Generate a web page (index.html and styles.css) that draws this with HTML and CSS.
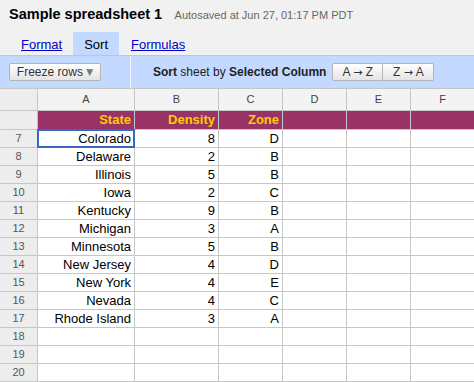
FILE: index.html
```html
<!DOCTYPE html>
<html lang="en">
<head>
  <meta charset="UTF-8">
  <title>Sample spreadsheet 1</title>
  <link rel="stylesheet" href="styles.css">
</head>

<body>
  <div class="titlebar">
    <span class="doc-title">Sample spreadsheet 1</span>
    <span class="autosave">Autosaved at Jun 27, 01:17 PM PDT</span>
  </div>

  <div class="tabs">
    <a class="tab" href="#">Format</a>
    <span class="tab active">Sort</span>
    <a class="tab" href="#">Formulas</a>
  </div>

  <div class="toolbar">
    <button class="btn freeze">Freeze rows <span class="caret">&#9660;</span></button>
    <div class="sep"></div>
    <span class="sort-label"><b>Sort</b> sheet by <b>Selected Column</b></span>
    <div class="btn-group">
      <button class="btn">A <span class="arrow">&rarr;</span> Z</button>
      <button class="btn">Z <span class="arrow">&rarr;</span> A</button>
    </div>
  </div>

  <div class="sheet">
    <div class="row colhead">
      <div class="corner"></div>
      <div>A</div><div>B</div><div>C</div><div>D</div><div>E</div><div>F</div>
    </div>
    <div class="row head">
      <div class="rownum"></div>
      <div>State</div><div>Density</div><div>Zone</div><div></div><div></div><div></div>
    </div>
    <div class="row">
      <div class="rownum">7</div>
      <div class="selected">Colorado</div><div>8</div><div>D</div><div></div><div></div><div></div>
    </div>
    <div class="row">
      <div class="rownum">8</div>
      <div>Delaware</div><div>2</div><div>B</div><div></div><div></div><div></div>
    </div>
    <div class="row">
      <div class="rownum">9</div>
      <div>Illinois</div><div>5</div><div>B</div><div></div><div></div><div></div>
    </div>
    <div class="row">
      <div class="rownum">10</div>
      <div>Iowa</div><div>2</div><div>C</div><div></div><div></div><div></div>
    </div>
    <div class="row">
      <div class="rownum">11</div>
      <div>Kentucky</div><div>9</div><div>B</div><div></div><div></div><div></div>
    </div>
    <div class="row">
      <div class="rownum">12</div>
      <div>Michigan</div><div>3</div><div>A</div><div></div><div></div><div></div>
    </div>
    <div class="row">
      <div class="rownum">13</div>
      <div>Minnesota</div><div>5</div><div>B</div><div></div><div></div><div></div>
    </div>
    <div class="row">
      <div class="rownum">14</div>
      <div>New Jersey</div><div>4</div><div>D</div><div></div><div></div><div></div>
    </div>
    <div class="row">
      <div class="rownum">15</div>
      <div>New York</div><div>4</div><div>E</div><div></div><div></div><div></div>
    </div>
    <div class="row">
      <div class="rownum">16</div>
      <div>Nevada</div><div>4</div><div>C</div><div></div><div></div><div></div>
    </div>
    <div class="row">
      <div class="rownum">17</div>
      <div>Rhode Island</div><div>3</div><div>A</div><div></div><div></div><div></div>
    </div>
    <div class="row">
      <div class="rownum">18</div>
      <div></div><div></div><div></div><div></div><div></div><div></div>
    </div>
    <div class="row">
      <div class="rownum">19</div>
      <div></div><div></div><div></div><div></div><div></div><div></div>
    </div>
    <div class="row">
      <div class="rownum">20</div>
      <div></div><div></div><div></div><div></div><div></div><div></div>
    </div>
  </div>
</body>
</html>
```

FILE: styles.css
```css
body {
  margin: 0;
  height: 382px;
  overflow: hidden;
  background-color: #f1f1f1;
  font-family: "Liberation Sans", Arial, sans-serif;
  color: #000;
}

.titlebar {
  height: 32px;
  box-sizing: border-box;
  padding: 6px 0 0 9px;
  line-height: 16px;
  white-space: nowrap;
}

.doc-title {
  font-size: 14.5px;
  font-weight: bold;
  margin-right: 8px;
}

.autosave {
  font-size: 11px;
  color: #666;
}

.tabs {
  display: flex;
  height: 23px;
  padding-left: 10px;
}

.tab {
  display: block;
  padding: 3px 11px 0;
  line-height: 20px;
  font-size: 13px;
  color: #0000cc;
  text-decoration: underline;
}

.tab.active {
  color: #000;
  text-decoration: none;
  background-color: #c3d9ff;
  margin-right: 1px;
}

.toolbar {
  display: flex;
  align-items: center;
  height: 33px;
  background-color: #c3d9ff;
  border-top: 1px solid #b8c8e4;
  box-sizing: border-box;
  padding-left: 9px;
  font-size: 12px;
}

.btn {
  height: 18px;
  box-sizing: border-box;
  padding: 0 8px;
  margin: 0;
  border: 1px solid #b4b4b4;
  border-radius: 2px;
  background: linear-gradient(#ffffff, #e4e4e4);
  font-family: "Liberation Sans", Arial, sans-serif;
  font-size: 12px;
  line-height: 16px;
  color: #333;
}

.freeze {
  width: 92px;
  padding: 0;
}

.caret {
  font-family: "DejaVu Sans", sans-serif;
  font-size: 9px;
  color: #777;
  vertical-align: 1px;
}

.arrow {
  font-family: "DejaVu Sans", sans-serif;
  font-size: 11px;
}

.sep {
  width: 1px;
  align-self: stretch;
  background-color: #eef4ff;
  margin: 0 22px 0 29px;
}

.sort-label {
  color: #222;
  margin-right: 6px;
}

.btn-group {
  display: flex;
}

.btn-group .btn {
  width: 51px;
  padding: 0;
  border-radius: 0;
}

.btn-group .btn + .btn {
  width: 51px;
  border-left: none;
}

.btn-group .btn:first-child {
  border-radius: 2px 0 0 2px;
}

.btn-group .btn:last-child {
  border-radius: 0 2px 2px 0;
}

.sheet {
  display: grid;
  grid-template-columns: 37px 96px 83px 63px 63px 63px 1fr;
  grid-auto-rows: 17px;
  grid-template-rows: 21px 18px;
  gap: 1px;
  padding: 1px 0;
  background-color: #c6c6c6;
  font-size: 13px;
}

.row {
  display: contents;
}

.row div {
  background-color: #fff;
  text-align: right;
  padding-right: 3px;
  line-height: 17px;
  white-space: nowrap;
  overflow: hidden;
}

.row .rownum,
.row .corner {
  background-color: #ededed;
  text-align: center;
  padding: 0;
  font-size: 11px;
  color: #555;
}

.colhead div {
  background-color: #f3f3f3;
  text-align: center;
  padding: 0;
  font-size: 11px;
  line-height: 21px;
  color: #444;
}

.head div {
  background-color: #993366;
  color: #ffcc00;
  font-weight: bold;
  line-height: 18px;
}

.row div.selected {
  overflow: visible;
  outline: 2px solid #3a66c4;
  outline-offset: -1px;
  position: relative;
}
```
